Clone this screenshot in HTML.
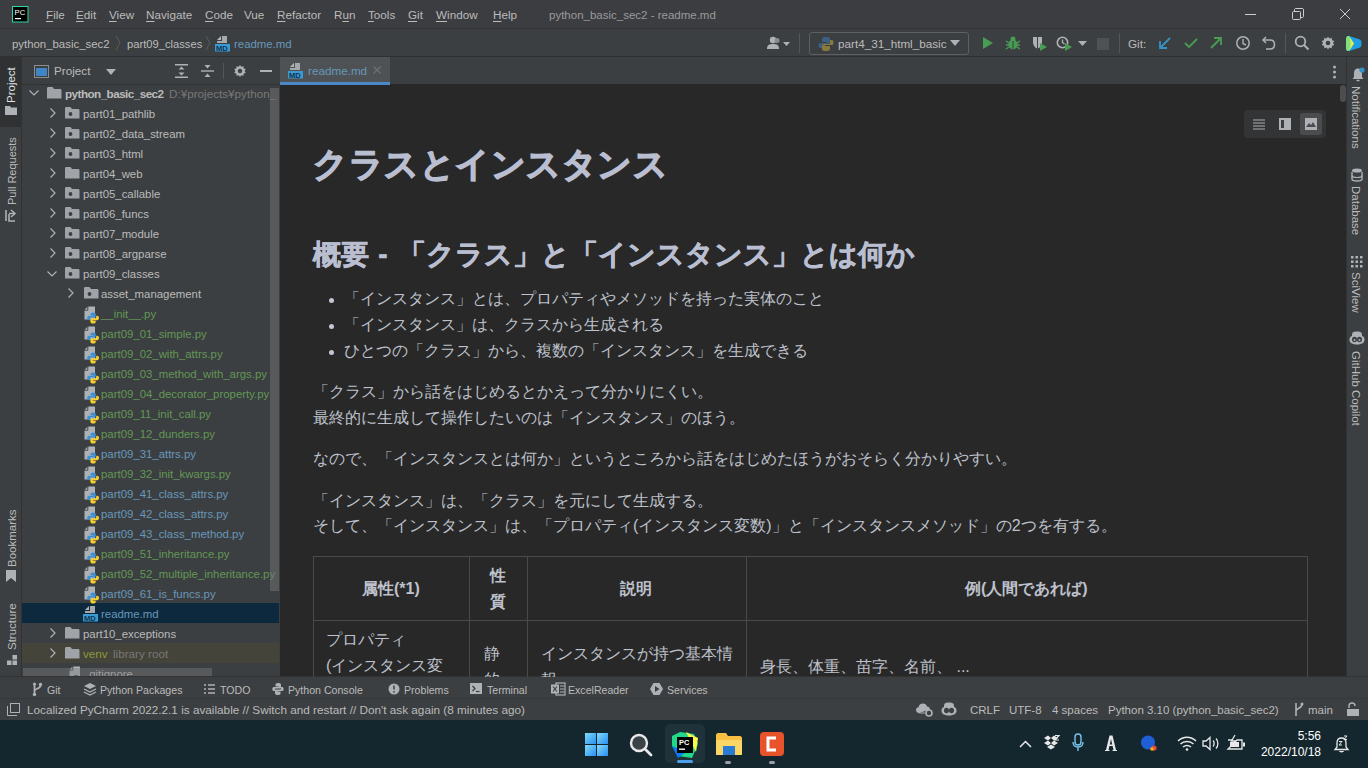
<!DOCTYPE html><html><head><meta charset="utf-8"><style>
*{box-sizing:border-box;margin:0;padding:0}
html,body{width:1368px;height:768px;overflow:hidden;background:#2b2b2b;font-family:"Liberation Sans",sans-serif;color:#bbbbbb}
.a{position:absolute}
.t{position:absolute;white-space:nowrap;font-size:11.7px;line-height:14px}
.u{text-decoration:underline;text-decoration-thickness:1px;text-underline-offset:2px}
svg{position:absolute;overflow:visible}
.md{position:absolute;white-space:nowrap;color:#bfc1c6}
</style></head><body>
<div class="a" style="left:0px;top:0px;width:1368px;height:29px;background:#3c3d41"></div>
<div class="a" style="left:0px;top:28px;width:1368px;height:1px;background:#323232"></div>
<div class="a" style="left:0px;top:29px;width:1368px;height:28px;background:#3c3f41"></div>
<div class="a" style="left:0px;top:56px;width:1368px;height:1px;background:#2f2f2f"></div>
<div class="a" style="left:0px;top:57px;width:22px;height:620px;background:#3c3f41"></div>
<div class="a" style="left:21px;top:57px;width:1px;height:620px;background:#323232"></div>
<div class="a" style="left:22px;top:57px;width:258px;height:620px;background:#3c3f41"></div>
<div class="a" style="left:280px;top:57px;width:1066px;height:27px;background:#3c3f41"></div>
<div class="a" style="left:280px;top:84px;width:1066px;height:593px;background:#282828"></div>
<div class="a" style="left:1346px;top:57px;width:22px;height:620px;background:#3c3f41"></div>
<div class="a" style="left:1346px;top:57px;width:1px;height:620px;background:#323232"></div>
<div class="a" style="left:0px;top:677px;width:1368px;height:21px;background:#3c3f41"></div>
<div class="a" style="left:0px;top:676px;width:1368px;height:1px;background:#323232"></div>
<div class="a" style="left:0px;top:698px;width:1368px;height:22px;background:#3c3f41"></div>
<div class="a" style="left:0px;top:698px;width:1368px;height:1px;background:#353739"></div>
<div class="a" style="left:0px;top:720px;width:1368px;height:48px;background:#14272e"></div>
<svg style="left:12px;top:6px" width="17" height="17" viewBox="0 0 17 17"><rect x="0.5" y="0.5" width="15.5" height="15.5" fill="#000" stroke="#2fd6a6" stroke-width="1"/><text x="2.6" y="8.6" font-size="7.6" fill="#fff" font-family="Liberation Sans">PC</text><rect x="3" y="12" width="6" height="1.2" fill="#fff"/></svg>
<div class="t" style="left:46px;top:8px;color:#bbbbbb"><span class="u">F</span>ile</div>
<div class="t" style="left:76px;top:8px;color:#bbbbbb"><span class="u">E</span>dit</div>
<div class="t" style="left:109px;top:8px;color:#bbbbbb"><span class="u">V</span>iew</div>
<div class="t" style="left:146px;top:8px;color:#bbbbbb"><span class="u">N</span>avigate</div>
<div class="t" style="left:205px;top:8px;color:#bbbbbb"><span class="u">C</span>ode</div>
<div class="t" style="left:244px;top:8px;color:#bbbbbb">Vue</div>
<div class="t" style="left:277px;top:8px;color:#bbbbbb"><span class="u">R</span>efactor</div>
<div class="t" style="left:334px;top:8px;color:#bbbbbb">R<span class="u">u</span>n</div>
<div class="t" style="left:368px;top:8px;color:#bbbbbb"><span class="u">T</span>ools</div>
<div class="t" style="left:408px;top:8px;color:#bbbbbb"><span class="u">G</span>it</div>
<div class="t" style="left:436px;top:8px;color:#bbbbbb"><span class="u">W</span>indow</div>
<div class="t" style="left:493px;top:8px;color:#bbbbbb"><span class="u">H</span>elp</div>
<div class="t" style="left:549px;top:8px;color:#9a9a9a;font-size:11.5px">python_basic_sec2 - readme.md</div>
<svg style="left:1244px;top:9px" width="14" height="10" viewBox="0 0 14 10"><line x1="1" y1="5.5" x2="12" y2="5.5" stroke="#ccc" stroke-width="1"/></svg>
<svg style="left:1292px;top:8px" width="13" height="13" viewBox="0 0 13 13"><rect x="0.5" y="3.5" width="8" height="8" rx="1" fill="none" stroke="#ccc"/><path d="M2.5 3V1.5C2.5 1 3 0.5 3.5 0.5H10.5C11 0.5 11.5 1 11.5 1.5V8.5C11.5 9 11 9.5 10.5 9.5H9" fill="none" stroke="#ccc"/></svg>
<svg style="left:1339px;top:8px" width="12" height="12" viewBox="0 0 12 12"><path d="M1 1L11 11M11 1L1 11" stroke="#ccc" stroke-width="1"/></svg>
<div class="t" style="left:12px;top:37px;color:#bbbbbb;font-size:11.4px">python_basic_sec2</div>
<svg style="left:115px;top:35px" width="6" height="16" viewBox="0 0 6 16"><path d="M1 1L5 8L1 15" fill="none" stroke="#5a5d5f" stroke-width="1"/></svg>
<div class="t" style="left:127px;top:37px;color:#bbbbbb;font-size:11.2px">part09_classes</div>
<svg style="left:205px;top:35px" width="6" height="16" viewBox="0 0 6 16"><path d="M1 1L5 8L1 15" fill="none" stroke="#5a5d5f" stroke-width="1"/></svg>
<svg style="left:215px;top:36px" width="16" height="16" viewBox="0 0 16 16"><path d="M2 4L6 0V4Z" fill="#b4b7ba"/><path d="M7 0H12V7H2V5H7Z" fill="#a6a9ac"/><rect x="0" y="8" width="15" height="7.5" fill="#3a9ad4"/><text x="1" y="14.8" font-size="7.6" fill="#123550" font-family="Liberation Sans" font-weight="bold" letter-spacing="-0.2">MD</text></svg>
<div class="t" style="left:234px;top:37px;color:#6897bb;font-size:11.4px">readme.md</div>
<svg style="left:766px;top:36px" width="24" height="14" viewBox="0 0 24 14"><circle cx="7" cy="4" r="3.2" fill="#aeb1b5"/><path d="M1 13C1 9 3 8 7 8C11 8 13 9 13 13Z" fill="#aeb1b5"/><circle cx="11" cy="4.5" r="2.5" fill="#8a8d90"/><path d="M17 6H24L20.5 10Z" fill="#aeb1b5"/></svg>
<div class="a" style="left:799px;top:33px;width:1px;height:20px;background:#515658"></div>
<div class="a" style="left:809px;top:32px;width:160px;height:23px;border:1px solid #5e6060;border-radius:3px;background:#3c3f41"></div>
<svg style="left:818px;top:36px" width="16" height="16" viewBox="0 0 16 16"><g opacity="0.55"><path d="M8 1C4 1 4 3 4 4V6H9V7H2C0 7 0 12 2 12H4V9C4 8 5 8 6 8H10C11 8 12 7 12 6V3C12 1 10 1 8 1Z" fill="#3e7bb8"/><path d="M8 15C12 15 12 13 12 12V10H7V9H14C16 9 16 4 14 4H12V7C12 8 11 8 10 8H6C5 8 4 9 4 10V13C4 15 6 15 8 15Z" fill="#c9a93a"/></g></svg>
<div class="t" style="left:838px;top:37px;color:#bbbbbb">part4_31_html_basic</div>
<svg style="left:950px;top:40px" width="10" height="6" viewBox="0 0 10 6"><path d="M0 0H10L5 6Z" fill="#aeb1b5"/></svg>
<svg style="left:982px;top:37px" width="12" height="12" viewBox="0 0 12 12"><path d="M1 0L11 6L1 12Z" fill="#499c54"/></svg>
<svg style="left:1005px;top:35px" width="16" height="16" viewBox="0 0 16 16"><ellipse cx="8" cy="9.5" rx="4.5" ry="5" fill="#499c54"/><circle cx="8" cy="4" r="2.5" fill="#499c54"/><path d="M1 6L4 8M15 6L12 8M1 10H4M15 10H12M1 14L4 12M15 14L12 12" stroke="#499c54" stroke-width="1.5"/><path d="M8 6V14" stroke="#3c3f41" stroke-width="1"/></svg>
<svg style="left:1031px;top:35px" width="18" height="18" viewBox="0 0 18 18"><path d="M2 2H11V7C11 11 8 13 6.5 14C5 13 2 11 2 7Z" fill="#aeb1b5"/><path d="M6.5 2V14" stroke="#3c3f41" stroke-width="1"/><path d="M9 8L16 12L9 16Z" fill="#499c54"/></svg>
<svg style="left:1056px;top:35px" width="18" height="18" viewBox="0 0 18 18"><circle cx="6.5" cy="7.5" r="5.2" fill="none" stroke="#aeb1b5" stroke-width="1.6"/><path d="M6.5 4.5V7.5L8.5 9" fill="none" stroke="#aeb1b5" stroke-width="1.3"/><path d="M9 8L16 12L9 16Z" fill="#499c54"/></svg>
<svg style="left:1078px;top:41px" width="9" height="5" viewBox="0 0 9 5"><path d="M0 0H9L4.5 5Z" fill="#aeb1b5"/></svg>
<div class="a" style="left:1097px;top:38px;width:12px;height:12px;background:#4f5254"></div>
<div class="a" style="left:1119px;top:33px;width:1px;height:20px;background:#515658"></div>
<div class="t" style="left:1128px;top:37px;color:#bbbbbb">Git:</div>
<svg style="left:1158px;top:36px" width="14" height="14" viewBox="0 0 14 14"><path d="M12 2L2 12M2 5V12H9" fill="none" stroke="#3592c4" stroke-width="1.8"/></svg>
<svg style="left:1184px;top:36px" width="14" height="14" viewBox="0 0 14 14"><path d="M1 7L5 11L13 3" fill="none" stroke="#499c54" stroke-width="1.8"/></svg>
<svg style="left:1209px;top:36px" width="14" height="14" viewBox="0 0 14 14"><path d="M2 12L12 2M5 2H12V9" fill="none" stroke="#499c54" stroke-width="1.8"/></svg>
<svg style="left:1235px;top:35px" width="16" height="16" viewBox="0 0 16 16"><circle cx="8" cy="8" r="6.2" fill="none" stroke="#aeb1b5" stroke-width="1.5"/><path d="M8 4V8.5L11 10" fill="none" stroke="#aeb1b5" stroke-width="1.4"/></svg>
<svg style="left:1261px;top:35px" width="16" height="16" viewBox="0 0 16 16"><path d="M5 2L2 5L5 8" fill="none" stroke="#aeb1b5" stroke-width="1.5"/><path d="M2.5 5H9C12 5 13.5 7 13.5 9.5C13.5 12 12 14 9 14H5" fill="none" stroke="#aeb1b5" stroke-width="1.5"/></svg>
<div class="a" style="left:1285px;top:33px;width:1px;height:20px;background:#515658"></div>
<svg style="left:1294px;top:35px" width="16" height="16" viewBox="0 0 16 16"><circle cx="6.5" cy="6.5" r="4.8" fill="none" stroke="#aeb1b5" stroke-width="1.8"/><path d="M10 10L14.5 14.5" stroke="#aeb1b5" stroke-width="2"/></svg>
<svg style="left:1320px;top:35px" width="16" height="16" viewBox="0 0 16 16"><path d="M8 1.5L9.3 3.5L11.7 2.8L12 5.2L14.3 6L13 8L14.3 10L12 10.8L11.7 13.2L9.3 12.5L8 14.5L6.7 12.5L4.3 13.2L4 10.8L1.7 10L3 8L1.7 6L4 5.2L4.3 2.8L6.7 3.5Z" fill="#aeb1b5"/><circle cx="8" cy="8" r="2.3" fill="#3c3f41"/></svg>
<svg style="left:1345px;top:35px" width="18" height="17" viewBox="0 0 18 17"><path d="M4 1L15 4.5C17 5 17 12 15 12.5L4 16C2 16.5 1 15 1 13V4C1 2 2 0.5 4 1Z" fill="#1d9fe8"/><path d="M4 1C2 0.5 1 2 1 4V13C1 15 2 16.5 4 16L9 8.5Z" fill="#7be27c"/><path d="M4 1L9 8.5L4 16C6 12 6 5 4 1Z" fill="#e8e85a"/></svg>
<div class="a" style="left:0px;top:57px;width:21px;height:70px;background:#2f3133"></div>
<div class="t" style="left:4px;top:103px;transform-origin:0 0;transform:rotate(-90deg);color:#dfe1e5;font-size:11.5px">Project</div>
<svg style="left:5px;top:105px" width="12" height="10" viewBox="0 0 12 10"><path d="M0 1H5L6 2.5H12V10H0Z" fill="#aeb1b5"/></svg>
<div class="t" style="left:5px;top:205px;transform-origin:0 0;transform:rotate(-90deg);color:#bbbbbb;font-size:11px">Pull Requests</div>
<svg style="left:5px;top:209px" width="12" height="13" viewBox="0 0 12 13"><path d="M1 1V12M4 5V12H10" fill="none" stroke="#aeb1b5" stroke-width="1.6"/><path d="M6 1L10 4.5L6 8" fill="none" stroke="#aeb1b5" stroke-width="1.5"/><path d="M4 4.5H10" stroke="#aeb1b5" stroke-width="1.5"/></svg>
<div class="t" style="left:5px;top:567px;transform-origin:0 0;transform:rotate(-90deg);color:#bbbbbb;font-size:11.5px">Bookmarks</div>
<svg style="left:6px;top:570px" width="10" height="12" viewBox="0 0 10 12"><path d="M0 0H10V12L5 8L0 12Z" fill="#aeb1b5"/></svg>
<div class="t" style="left:5px;top:650px;transform-origin:0 0;transform:rotate(-90deg);color:#bbbbbb;font-size:11.5px">Structure</div>
<svg style="left:7px;top:655px" width="10" height="10" viewBox="0 0 10 10"><rect x="0" y="5.5" width="4.5" height="4.5" fill="#aeb1b5"/><rect x="5.5" y="5.5" width="4.5" height="4.5" fill="#aeb1b5"/><rect x="5.5" y="0" width="4.5" height="4.5" fill="#aeb1b5"/></svg>
<svg style="left:34px;top:65px" width="15" height="13" viewBox="0 0 15 13"><rect x="0.5" y="0.5" width="14" height="12" fill="none" stroke="#8a8d90"/><rect x="2" y="3" width="11" height="8" fill="#3e86c5"/></svg>
<div class="t" style="left:54px;top:64px;color:#bbbbbb">Project</div>
<svg style="left:106px;top:69px" width="10" height="6" viewBox="0 0 10 6"><path d="M0 0H10L5 6Z" fill="#aeb1b5"/></svg>
<svg style="left:175px;top:64px" width="13" height="14" viewBox="0 0 13 14"><path d="M0 0.7H13M0 13.3H13" stroke="#aeb1b5" stroke-width="1.4"/><path d="M3.5 5.5L6.5 2.5L9.5 5.5M3.5 8.5L6.5 11.5L9.5 8.5" fill="#aeb1b5"/></svg>
<svg style="left:201px;top:64px" width="13" height="14" viewBox="0 0 13 14"><path d="M0 7H13" stroke="#aeb1b5" stroke-width="1.4"/><path d="M3.5 1L6.5 4.5L9.5 1ZM3.5 13L6.5 9.5L9.5 13Z" fill="#aeb1b5"/></svg>
<div class="a" style="left:223px;top:63px;width:1px;height:16px;background:#515658"></div>
<svg style="left:233px;top:64px" width="14" height="14" viewBox="0 0 14 14"><path d="M7 0.5L8.2 2.3L10.4 1.7L10.7 3.9L12.8 4.6L11.6 6.5L12.8 8.4L10.7 9.1L10.4 11.3L8.2 10.7L7 12.5L5.8 10.7L3.6 11.3L3.3 9.1L1.2 8.4L2.4 6.5L1.2 4.6L3.3 3.9L3.6 1.7L5.8 2.3Z" fill="#aeb1b5" transform="translate(0,0.5)"/><circle cx="7" cy="7" r="2.2" fill="#3c3f41"/></svg>
<div class="a" style="left:260px;top:70px;width:12px;height:1.5px;background:#aeb1b5"></div>
<div class="a" style="left:22px;top:84px;width:258px;height:1px;background:#323232"></div>
<div class="a" style="left:22px;top:603px;width:257px;height:20px;background:#0d293e"></div>
<div class="a" style="left:22px;top:643px;width:257px;height:20px;background:#45443a"></div>
<svg style="left:29px;top:90px" width="10" height="6" viewBox="0 0 10 6"><path d="M0.5 0.5L5 5L9.5 0.5" fill="none" stroke="#aeb1b5" stroke-width="1.2"/></svg>
<svg style="left:47px;top:87px" width="15" height="12" viewBox="0 0 15 12"><path d="M0 1.5C0 0.7 0.5 0 1.3 0H5.5L7 2H13.2C14 2 14.5 2.6 14.5 3.3V11.5H0Z" fill="#a0a3a7"/></svg>
<div class="t" style="left:65px;top:87px;color:#bbbbbb;letter-spacing:-0.55px"><b>python_basic_sec2</b></div>
<div class="t" style="left:169px;top:87px;color:#787878">D:¥projects¥python_</div>
<svg style="left:50px;top:108px" width="6" height="10" viewBox="0 0 6 10"><path d="M0.5 0.5L5 5L0.5 9.5" fill="none" stroke="#aeb1b5" stroke-width="1.2"/></svg>
<svg style="left:65px;top:107px" width="15" height="12" viewBox="0 0 15 12"><path d="M0 1.5C0 0.7 0.5 0 1.3 0H5.5L7 2H13.2C14 2 14.5 2.6 14.5 3.3V11.5H0Z" fill="#a0a3a7"/><circle cx="5.5" cy="7" r="1.9" fill="#3c3f41"/></svg>
<div class="t" style="left:83px;top:107px;color:#bbbbbb;font-size:11.4px">part01_pathlib</div>
<svg style="left:50px;top:128px" width="6" height="10" viewBox="0 0 6 10"><path d="M0.5 0.5L5 5L0.5 9.5" fill="none" stroke="#aeb1b5" stroke-width="1.2"/></svg>
<svg style="left:65px;top:127px" width="15" height="12" viewBox="0 0 15 12"><path d="M0 1.5C0 0.7 0.5 0 1.3 0H5.5L7 2H13.2C14 2 14.5 2.6 14.5 3.3V11.5H0Z" fill="#a0a3a7"/><circle cx="5.5" cy="7" r="1.9" fill="#3c3f41"/></svg>
<div class="t" style="left:83px;top:127px;color:#bbbbbb;font-size:11.4px">part02_data_stream</div>
<svg style="left:50px;top:148px" width="6" height="10" viewBox="0 0 6 10"><path d="M0.5 0.5L5 5L0.5 9.5" fill="none" stroke="#aeb1b5" stroke-width="1.2"/></svg>
<svg style="left:65px;top:147px" width="15" height="12" viewBox="0 0 15 12"><path d="M0 1.5C0 0.7 0.5 0 1.3 0H5.5L7 2H13.2C14 2 14.5 2.6 14.5 3.3V11.5H0Z" fill="#a0a3a7"/><circle cx="5.5" cy="7" r="1.9" fill="#3c3f41"/></svg>
<div class="t" style="left:83px;top:147px;color:#bbbbbb;font-size:11.4px">part03_html</div>
<svg style="left:50px;top:168px" width="6" height="10" viewBox="0 0 6 10"><path d="M0.5 0.5L5 5L0.5 9.5" fill="none" stroke="#aeb1b5" stroke-width="1.2"/></svg>
<svg style="left:65px;top:167px" width="15" height="12" viewBox="0 0 15 12"><path d="M0 1.5C0 0.7 0.5 0 1.3 0H5.5L7 2H13.2C14 2 14.5 2.6 14.5 3.3V11.5H0Z" fill="#a0a3a7"/></svg>
<div class="t" style="left:83px;top:167px;color:#bbbbbb;font-size:11.4px">part04_web</div>
<svg style="left:50px;top:188px" width="6" height="10" viewBox="0 0 6 10"><path d="M0.5 0.5L5 5L0.5 9.5" fill="none" stroke="#aeb1b5" stroke-width="1.2"/></svg>
<svg style="left:65px;top:187px" width="15" height="12" viewBox="0 0 15 12"><path d="M0 1.5C0 0.7 0.5 0 1.3 0H5.5L7 2H13.2C14 2 14.5 2.6 14.5 3.3V11.5H0Z" fill="#a0a3a7"/><circle cx="5.5" cy="7" r="1.9" fill="#3c3f41"/></svg>
<div class="t" style="left:83px;top:187px;color:#bbbbbb;font-size:11.4px">part05_callable</div>
<svg style="left:50px;top:208px" width="6" height="10" viewBox="0 0 6 10"><path d="M0.5 0.5L5 5L0.5 9.5" fill="none" stroke="#aeb1b5" stroke-width="1.2"/></svg>
<svg style="left:65px;top:207px" width="15" height="12" viewBox="0 0 15 12"><path d="M0 1.5C0 0.7 0.5 0 1.3 0H5.5L7 2H13.2C14 2 14.5 2.6 14.5 3.3V11.5H0Z" fill="#a0a3a7"/><circle cx="5.5" cy="7" r="1.9" fill="#3c3f41"/></svg>
<div class="t" style="left:83px;top:207px;color:#bbbbbb;font-size:11.4px">part06_funcs</div>
<svg style="left:50px;top:228px" width="6" height="10" viewBox="0 0 6 10"><path d="M0.5 0.5L5 5L0.5 9.5" fill="none" stroke="#aeb1b5" stroke-width="1.2"/></svg>
<svg style="left:65px;top:227px" width="15" height="12" viewBox="0 0 15 12"><path d="M0 1.5C0 0.7 0.5 0 1.3 0H5.5L7 2H13.2C14 2 14.5 2.6 14.5 3.3V11.5H0Z" fill="#a0a3a7"/><circle cx="5.5" cy="7" r="1.9" fill="#3c3f41"/></svg>
<div class="t" style="left:83px;top:227px;color:#bbbbbb;font-size:11.4px">part07_module</div>
<svg style="left:50px;top:248px" width="6" height="10" viewBox="0 0 6 10"><path d="M0.5 0.5L5 5L0.5 9.5" fill="none" stroke="#aeb1b5" stroke-width="1.2"/></svg>
<svg style="left:65px;top:247px" width="15" height="12" viewBox="0 0 15 12"><path d="M0 1.5C0 0.7 0.5 0 1.3 0H5.5L7 2H13.2C14 2 14.5 2.6 14.5 3.3V11.5H0Z" fill="#a0a3a7"/><circle cx="5.5" cy="7" r="1.9" fill="#3c3f41"/></svg>
<div class="t" style="left:83px;top:247px;color:#bbbbbb;font-size:11.4px">part08_argparse</div>
<svg style="left:47px;top:271px" width="10" height="6" viewBox="0 0 10 6"><path d="M0.5 0.5L5 5L9.5 0.5" fill="none" stroke="#aeb1b5" stroke-width="1.2"/></svg>
<svg style="left:65px;top:267px" width="15" height="12" viewBox="0 0 15 12"><path d="M0 1.5C0 0.7 0.5 0 1.3 0H5.5L7 2H13.2C14 2 14.5 2.6 14.5 3.3V11.5H0Z" fill="#a0a3a7"/><circle cx="5.5" cy="7" r="1.9" fill="#3c3f41"/></svg>
<div class="t" style="left:83px;top:267px;color:#bbbbbb;font-size:11.4px">part09_classes</div>
<svg style="left:68px;top:288px" width="6" height="10" viewBox="0 0 6 10"><path d="M0.5 0.5L5 5L0.5 9.5" fill="none" stroke="#aeb1b5" stroke-width="1.2"/></svg>
<svg style="left:84px;top:287px" width="15" height="12" viewBox="0 0 15 12"><path d="M0 1.5C0 0.7 0.5 0 1.3 0H5.5L7 2H13.2C14 2 14.5 2.6 14.5 3.3V11.5H0Z" fill="#a0a3a7"/><circle cx="5.5" cy="7" r="1.9" fill="#3c3f41"/></svg>
<div class="t" style="left:101px;top:287px;color:#bbbbbb;font-size:11.4px">asset_management</div>
<svg style="left:83px;top:306px" width="16" height="16" viewBox="0 0 16 16"><path d="M5.5 0.5H12V13.5H1.5V5Z" fill="#aeb1b5"/><path d="M1.5 4L4.5 0.5V4Z" fill="#aeb1b5"/><path d="M1.5 4.2H4.8V0.5" fill="none" stroke="#3c3f41" stroke-width="0.9"/><path d="M10 6.5C8 6.5 7.5 7.3 7.5 8.3V9.2H10.3V9.8H6.2C5 9.8 4.2 10.6 4.2 12C4.2 13.4 5 14.2 6.1 14.2H7V12.9C7 12 7.6 11.5 8.5 11.5H11.4C12.2 11.5 12.8 10.9 12.8 10.1V8.3C12.8 7.4 12 6.5 10 6.5Z" fill="#3d8fd6"/><path d="M10.2 17.5C12.2 17.5 12.7 16.7 12.7 15.7V14.8H9.9V14.2H14C15.2 14.2 16 13.4 16 12C16 10.6 15.2 9.8 14.1 9.8H13.2V11.1C13.2 12 12.6 12.5 11.7 12.5H8.8C8 12.5 7.4 13.1 7.4 13.9V15.7C7.4 16.6 8.2 17.5 10.2 17.5Z" fill="#f5cf2f"/></svg>
<div class="t" style="left:101px;top:307px;color:#629755;font-size:11.4px">__init__.py</div>
<svg style="left:83px;top:326px" width="16" height="16" viewBox="0 0 16 16"><path d="M5.5 0.5H12V13.5H1.5V5Z" fill="#aeb1b5"/><path d="M1.5 4L4.5 0.5V4Z" fill="#aeb1b5"/><path d="M1.5 4.2H4.8V0.5" fill="none" stroke="#3c3f41" stroke-width="0.9"/><path d="M10 6.5C8 6.5 7.5 7.3 7.5 8.3V9.2H10.3V9.8H6.2C5 9.8 4.2 10.6 4.2 12C4.2 13.4 5 14.2 6.1 14.2H7V12.9C7 12 7.6 11.5 8.5 11.5H11.4C12.2 11.5 12.8 10.9 12.8 10.1V8.3C12.8 7.4 12 6.5 10 6.5Z" fill="#3d8fd6"/><path d="M10.2 17.5C12.2 17.5 12.7 16.7 12.7 15.7V14.8H9.9V14.2H14C15.2 14.2 16 13.4 16 12C16 10.6 15.2 9.8 14.1 9.8H13.2V11.1C13.2 12 12.6 12.5 11.7 12.5H8.8C8 12.5 7.4 13.1 7.4 13.9V15.7C7.4 16.6 8.2 17.5 10.2 17.5Z" fill="#f5cf2f"/></svg>
<div class="t" style="left:101px;top:327px;color:#629755;font-size:11.4px">part09_01_simple.py</div>
<svg style="left:83px;top:346px" width="16" height="16" viewBox="0 0 16 16"><path d="M5.5 0.5H12V13.5H1.5V5Z" fill="#aeb1b5"/><path d="M1.5 4L4.5 0.5V4Z" fill="#aeb1b5"/><path d="M1.5 4.2H4.8V0.5" fill="none" stroke="#3c3f41" stroke-width="0.9"/><path d="M10 6.5C8 6.5 7.5 7.3 7.5 8.3V9.2H10.3V9.8H6.2C5 9.8 4.2 10.6 4.2 12C4.2 13.4 5 14.2 6.1 14.2H7V12.9C7 12 7.6 11.5 8.5 11.5H11.4C12.2 11.5 12.8 10.9 12.8 10.1V8.3C12.8 7.4 12 6.5 10 6.5Z" fill="#3d8fd6"/><path d="M10.2 17.5C12.2 17.5 12.7 16.7 12.7 15.7V14.8H9.9V14.2H14C15.2 14.2 16 13.4 16 12C16 10.6 15.2 9.8 14.1 9.8H13.2V11.1C13.2 12 12.6 12.5 11.7 12.5H8.8C8 12.5 7.4 13.1 7.4 13.9V15.7C7.4 16.6 8.2 17.5 10.2 17.5Z" fill="#f5cf2f"/></svg>
<div class="t" style="left:101px;top:347px;color:#629755;font-size:11.4px">part09_02_with_attrs.py</div>
<svg style="left:83px;top:366px" width="16" height="16" viewBox="0 0 16 16"><path d="M5.5 0.5H12V13.5H1.5V5Z" fill="#aeb1b5"/><path d="M1.5 4L4.5 0.5V4Z" fill="#aeb1b5"/><path d="M1.5 4.2H4.8V0.5" fill="none" stroke="#3c3f41" stroke-width="0.9"/><path d="M10 6.5C8 6.5 7.5 7.3 7.5 8.3V9.2H10.3V9.8H6.2C5 9.8 4.2 10.6 4.2 12C4.2 13.4 5 14.2 6.1 14.2H7V12.9C7 12 7.6 11.5 8.5 11.5H11.4C12.2 11.5 12.8 10.9 12.8 10.1V8.3C12.8 7.4 12 6.5 10 6.5Z" fill="#3d8fd6"/><path d="M10.2 17.5C12.2 17.5 12.7 16.7 12.7 15.7V14.8H9.9V14.2H14C15.2 14.2 16 13.4 16 12C16 10.6 15.2 9.8 14.1 9.8H13.2V11.1C13.2 12 12.6 12.5 11.7 12.5H8.8C8 12.5 7.4 13.1 7.4 13.9V15.7C7.4 16.6 8.2 17.5 10.2 17.5Z" fill="#f5cf2f"/></svg>
<div class="t" style="left:101px;top:367px;color:#629755;font-size:11.4px">part09_03_method_with_args.py</div>
<svg style="left:83px;top:386px" width="16" height="16" viewBox="0 0 16 16"><path d="M5.5 0.5H12V13.5H1.5V5Z" fill="#aeb1b5"/><path d="M1.5 4L4.5 0.5V4Z" fill="#aeb1b5"/><path d="M1.5 4.2H4.8V0.5" fill="none" stroke="#3c3f41" stroke-width="0.9"/><path d="M10 6.5C8 6.5 7.5 7.3 7.5 8.3V9.2H10.3V9.8H6.2C5 9.8 4.2 10.6 4.2 12C4.2 13.4 5 14.2 6.1 14.2H7V12.9C7 12 7.6 11.5 8.5 11.5H11.4C12.2 11.5 12.8 10.9 12.8 10.1V8.3C12.8 7.4 12 6.5 10 6.5Z" fill="#3d8fd6"/><path d="M10.2 17.5C12.2 17.5 12.7 16.7 12.7 15.7V14.8H9.9V14.2H14C15.2 14.2 16 13.4 16 12C16 10.6 15.2 9.8 14.1 9.8H13.2V11.1C13.2 12 12.6 12.5 11.7 12.5H8.8C8 12.5 7.4 13.1 7.4 13.9V15.7C7.4 16.6 8.2 17.5 10.2 17.5Z" fill="#f5cf2f"/></svg>
<div class="t" style="left:101px;top:387px;color:#629755;font-size:11.4px">part09_04_decorator_property.py</div>
<svg style="left:83px;top:406px" width="16" height="16" viewBox="0 0 16 16"><path d="M5.5 0.5H12V13.5H1.5V5Z" fill="#aeb1b5"/><path d="M1.5 4L4.5 0.5V4Z" fill="#aeb1b5"/><path d="M1.5 4.2H4.8V0.5" fill="none" stroke="#3c3f41" stroke-width="0.9"/><path d="M10 6.5C8 6.5 7.5 7.3 7.5 8.3V9.2H10.3V9.8H6.2C5 9.8 4.2 10.6 4.2 12C4.2 13.4 5 14.2 6.1 14.2H7V12.9C7 12 7.6 11.5 8.5 11.5H11.4C12.2 11.5 12.8 10.9 12.8 10.1V8.3C12.8 7.4 12 6.5 10 6.5Z" fill="#3d8fd6"/><path d="M10.2 17.5C12.2 17.5 12.7 16.7 12.7 15.7V14.8H9.9V14.2H14C15.2 14.2 16 13.4 16 12C16 10.6 15.2 9.8 14.1 9.8H13.2V11.1C13.2 12 12.6 12.5 11.7 12.5H8.8C8 12.5 7.4 13.1 7.4 13.9V15.7C7.4 16.6 8.2 17.5 10.2 17.5Z" fill="#f5cf2f"/></svg>
<div class="t" style="left:101px;top:407px;color:#629755;font-size:11.4px">part09_11_init_call.py</div>
<svg style="left:83px;top:426px" width="16" height="16" viewBox="0 0 16 16"><path d="M5.5 0.5H12V13.5H1.5V5Z" fill="#aeb1b5"/><path d="M1.5 4L4.5 0.5V4Z" fill="#aeb1b5"/><path d="M1.5 4.2H4.8V0.5" fill="none" stroke="#3c3f41" stroke-width="0.9"/><path d="M10 6.5C8 6.5 7.5 7.3 7.5 8.3V9.2H10.3V9.8H6.2C5 9.8 4.2 10.6 4.2 12C4.2 13.4 5 14.2 6.1 14.2H7V12.9C7 12 7.6 11.5 8.5 11.5H11.4C12.2 11.5 12.8 10.9 12.8 10.1V8.3C12.8 7.4 12 6.5 10 6.5Z" fill="#3d8fd6"/><path d="M10.2 17.5C12.2 17.5 12.7 16.7 12.7 15.7V14.8H9.9V14.2H14C15.2 14.2 16 13.4 16 12C16 10.6 15.2 9.8 14.1 9.8H13.2V11.1C13.2 12 12.6 12.5 11.7 12.5H8.8C8 12.5 7.4 13.1 7.4 13.9V15.7C7.4 16.6 8.2 17.5 10.2 17.5Z" fill="#f5cf2f"/></svg>
<div class="t" style="left:101px;top:427px;color:#629755;font-size:11.4px">part09_12_dunders.py</div>
<svg style="left:83px;top:446px" width="16" height="16" viewBox="0 0 16 16"><path d="M5.5 0.5H12V13.5H1.5V5Z" fill="#aeb1b5"/><path d="M1.5 4L4.5 0.5V4Z" fill="#aeb1b5"/><path d="M1.5 4.2H4.8V0.5" fill="none" stroke="#3c3f41" stroke-width="0.9"/><path d="M10 6.5C8 6.5 7.5 7.3 7.5 8.3V9.2H10.3V9.8H6.2C5 9.8 4.2 10.6 4.2 12C4.2 13.4 5 14.2 6.1 14.2H7V12.9C7 12 7.6 11.5 8.5 11.5H11.4C12.2 11.5 12.8 10.9 12.8 10.1V8.3C12.8 7.4 12 6.5 10 6.5Z" fill="#3d8fd6"/><path d="M10.2 17.5C12.2 17.5 12.7 16.7 12.7 15.7V14.8H9.9V14.2H14C15.2 14.2 16 13.4 16 12C16 10.6 15.2 9.8 14.1 9.8H13.2V11.1C13.2 12 12.6 12.5 11.7 12.5H8.8C8 12.5 7.4 13.1 7.4 13.9V15.7C7.4 16.6 8.2 17.5 10.2 17.5Z" fill="#f5cf2f"/></svg>
<div class="t" style="left:101px;top:447px;color:#6897bb;font-size:11.4px">part09_31_attrs.py</div>
<svg style="left:83px;top:466px" width="16" height="16" viewBox="0 0 16 16"><path d="M5.5 0.5H12V13.5H1.5V5Z" fill="#aeb1b5"/><path d="M1.5 4L4.5 0.5V4Z" fill="#aeb1b5"/><path d="M1.5 4.2H4.8V0.5" fill="none" stroke="#3c3f41" stroke-width="0.9"/><path d="M10 6.5C8 6.5 7.5 7.3 7.5 8.3V9.2H10.3V9.8H6.2C5 9.8 4.2 10.6 4.2 12C4.2 13.4 5 14.2 6.1 14.2H7V12.9C7 12 7.6 11.5 8.5 11.5H11.4C12.2 11.5 12.8 10.9 12.8 10.1V8.3C12.8 7.4 12 6.5 10 6.5Z" fill="#3d8fd6"/><path d="M10.2 17.5C12.2 17.5 12.7 16.7 12.7 15.7V14.8H9.9V14.2H14C15.2 14.2 16 13.4 16 12C16 10.6 15.2 9.8 14.1 9.8H13.2V11.1C13.2 12 12.6 12.5 11.7 12.5H8.8C8 12.5 7.4 13.1 7.4 13.9V15.7C7.4 16.6 8.2 17.5 10.2 17.5Z" fill="#f5cf2f"/></svg>
<div class="t" style="left:101px;top:467px;color:#629755;font-size:11.4px">part09_32_init_kwargs.py</div>
<svg style="left:83px;top:486px" width="16" height="16" viewBox="0 0 16 16"><path d="M5.5 0.5H12V13.5H1.5V5Z" fill="#aeb1b5"/><path d="M1.5 4L4.5 0.5V4Z" fill="#aeb1b5"/><path d="M1.5 4.2H4.8V0.5" fill="none" stroke="#3c3f41" stroke-width="0.9"/><path d="M10 6.5C8 6.5 7.5 7.3 7.5 8.3V9.2H10.3V9.8H6.2C5 9.8 4.2 10.6 4.2 12C4.2 13.4 5 14.2 6.1 14.2H7V12.9C7 12 7.6 11.5 8.5 11.5H11.4C12.2 11.5 12.8 10.9 12.8 10.1V8.3C12.8 7.4 12 6.5 10 6.5Z" fill="#3d8fd6"/><path d="M10.2 17.5C12.2 17.5 12.7 16.7 12.7 15.7V14.8H9.9V14.2H14C15.2 14.2 16 13.4 16 12C16 10.6 15.2 9.8 14.1 9.8H13.2V11.1C13.2 12 12.6 12.5 11.7 12.5H8.8C8 12.5 7.4 13.1 7.4 13.9V15.7C7.4 16.6 8.2 17.5 10.2 17.5Z" fill="#f5cf2f"/></svg>
<div class="t" style="left:101px;top:487px;color:#6897bb;font-size:11.4px">part09_41_class_attrs.py</div>
<svg style="left:83px;top:506px" width="16" height="16" viewBox="0 0 16 16"><path d="M5.5 0.5H12V13.5H1.5V5Z" fill="#aeb1b5"/><path d="M1.5 4L4.5 0.5V4Z" fill="#aeb1b5"/><path d="M1.5 4.2H4.8V0.5" fill="none" stroke="#3c3f41" stroke-width="0.9"/><path d="M10 6.5C8 6.5 7.5 7.3 7.5 8.3V9.2H10.3V9.8H6.2C5 9.8 4.2 10.6 4.2 12C4.2 13.4 5 14.2 6.1 14.2H7V12.9C7 12 7.6 11.5 8.5 11.5H11.4C12.2 11.5 12.8 10.9 12.8 10.1V8.3C12.8 7.4 12 6.5 10 6.5Z" fill="#3d8fd6"/><path d="M10.2 17.5C12.2 17.5 12.7 16.7 12.7 15.7V14.8H9.9V14.2H14C15.2 14.2 16 13.4 16 12C16 10.6 15.2 9.8 14.1 9.8H13.2V11.1C13.2 12 12.6 12.5 11.7 12.5H8.8C8 12.5 7.4 13.1 7.4 13.9V15.7C7.4 16.6 8.2 17.5 10.2 17.5Z" fill="#f5cf2f"/></svg>
<div class="t" style="left:101px;top:507px;color:#6897bb;font-size:11.4px">part09_42_class_attrs.py</div>
<svg style="left:83px;top:526px" width="16" height="16" viewBox="0 0 16 16"><path d="M5.5 0.5H12V13.5H1.5V5Z" fill="#aeb1b5"/><path d="M1.5 4L4.5 0.5V4Z" fill="#aeb1b5"/><path d="M1.5 4.2H4.8V0.5" fill="none" stroke="#3c3f41" stroke-width="0.9"/><path d="M10 6.5C8 6.5 7.5 7.3 7.5 8.3V9.2H10.3V9.8H6.2C5 9.8 4.2 10.6 4.2 12C4.2 13.4 5 14.2 6.1 14.2H7V12.9C7 12 7.6 11.5 8.5 11.5H11.4C12.2 11.5 12.8 10.9 12.8 10.1V8.3C12.8 7.4 12 6.5 10 6.5Z" fill="#3d8fd6"/><path d="M10.2 17.5C12.2 17.5 12.7 16.7 12.7 15.7V14.8H9.9V14.2H14C15.2 14.2 16 13.4 16 12C16 10.6 15.2 9.8 14.1 9.8H13.2V11.1C13.2 12 12.6 12.5 11.7 12.5H8.8C8 12.5 7.4 13.1 7.4 13.9V15.7C7.4 16.6 8.2 17.5 10.2 17.5Z" fill="#f5cf2f"/></svg>
<div class="t" style="left:101px;top:527px;color:#6897bb;font-size:11.4px">part09_43_class_method.py</div>
<svg style="left:83px;top:546px" width="16" height="16" viewBox="0 0 16 16"><path d="M5.5 0.5H12V13.5H1.5V5Z" fill="#aeb1b5"/><path d="M1.5 4L4.5 0.5V4Z" fill="#aeb1b5"/><path d="M1.5 4.2H4.8V0.5" fill="none" stroke="#3c3f41" stroke-width="0.9"/><path d="M10 6.5C8 6.5 7.5 7.3 7.5 8.3V9.2H10.3V9.8H6.2C5 9.8 4.2 10.6 4.2 12C4.2 13.4 5 14.2 6.1 14.2H7V12.9C7 12 7.6 11.5 8.5 11.5H11.4C12.2 11.5 12.8 10.9 12.8 10.1V8.3C12.8 7.4 12 6.5 10 6.5Z" fill="#3d8fd6"/><path d="M10.2 17.5C12.2 17.5 12.7 16.7 12.7 15.7V14.8H9.9V14.2H14C15.2 14.2 16 13.4 16 12C16 10.6 15.2 9.8 14.1 9.8H13.2V11.1C13.2 12 12.6 12.5 11.7 12.5H8.8C8 12.5 7.4 13.1 7.4 13.9V15.7C7.4 16.6 8.2 17.5 10.2 17.5Z" fill="#f5cf2f"/></svg>
<div class="t" style="left:101px;top:547px;color:#629755;font-size:11.4px">part09_51_inheritance.py</div>
<svg style="left:83px;top:566px" width="16" height="16" viewBox="0 0 16 16"><path d="M5.5 0.5H12V13.5H1.5V5Z" fill="#aeb1b5"/><path d="M1.5 4L4.5 0.5V4Z" fill="#aeb1b5"/><path d="M1.5 4.2H4.8V0.5" fill="none" stroke="#3c3f41" stroke-width="0.9"/><path d="M10 6.5C8 6.5 7.5 7.3 7.5 8.3V9.2H10.3V9.8H6.2C5 9.8 4.2 10.6 4.2 12C4.2 13.4 5 14.2 6.1 14.2H7V12.9C7 12 7.6 11.5 8.5 11.5H11.4C12.2 11.5 12.8 10.9 12.8 10.1V8.3C12.8 7.4 12 6.5 10 6.5Z" fill="#3d8fd6"/><path d="M10.2 17.5C12.2 17.5 12.7 16.7 12.7 15.7V14.8H9.9V14.2H14C15.2 14.2 16 13.4 16 12C16 10.6 15.2 9.8 14.1 9.8H13.2V11.1C13.2 12 12.6 12.5 11.7 12.5H8.8C8 12.5 7.4 13.1 7.4 13.9V15.7C7.4 16.6 8.2 17.5 10.2 17.5Z" fill="#f5cf2f"/></svg>
<div class="t" style="left:101px;top:567px;color:#629755;font-size:11.4px">part09_52_multiple_inheritance.py</div>
<svg style="left:83px;top:586px" width="16" height="16" viewBox="0 0 16 16"><path d="M5.5 0.5H12V13.5H1.5V5Z" fill="#aeb1b5"/><path d="M1.5 4L4.5 0.5V4Z" fill="#aeb1b5"/><path d="M1.5 4.2H4.8V0.5" fill="none" stroke="#3c3f41" stroke-width="0.9"/><path d="M10 6.5C8 6.5 7.5 7.3 7.5 8.3V9.2H10.3V9.8H6.2C5 9.8 4.2 10.6 4.2 12C4.2 13.4 5 14.2 6.1 14.2H7V12.9C7 12 7.6 11.5 8.5 11.5H11.4C12.2 11.5 12.8 10.9 12.8 10.1V8.3C12.8 7.4 12 6.5 10 6.5Z" fill="#3d8fd6"/><path d="M10.2 17.5C12.2 17.5 12.7 16.7 12.7 15.7V14.8H9.9V14.2H14C15.2 14.2 16 13.4 16 12C16 10.6 15.2 9.8 14.1 9.8H13.2V11.1C13.2 12 12.6 12.5 11.7 12.5H8.8C8 12.5 7.4 13.1 7.4 13.9V15.7C7.4 16.6 8.2 17.5 10.2 17.5Z" fill="#f5cf2f"/></svg>
<div class="t" style="left:101px;top:587px;color:#6897bb;font-size:11.4px">part09_61_is_funcs.py</div>
<svg style="left:83px;top:606px" width="16" height="16" viewBox="0 0 16 16"><path d="M2 4L6 0V4Z" fill="#b4b7ba"/><path d="M7 0H12V7H2V5H7Z" fill="#a6a9ac"/><rect x="0" y="8" width="15" height="7.5" fill="#3a9ad4"/><text x="1" y="14.8" font-size="7.6" fill="#123550" font-family="Liberation Sans" font-weight="bold" letter-spacing="-0.2">MD</text></svg>
<div class="t" style="left:101px;top:607px;color:#6897bb;font-size:11.4px">readme.md</div>
<svg style="left:50px;top:628px" width="6" height="10" viewBox="0 0 6 10"><path d="M0.5 0.5L5 5L0.5 9.5" fill="none" stroke="#aeb1b5" stroke-width="1.2"/></svg>
<svg style="left:65px;top:627px" width="15" height="12" viewBox="0 0 15 12"><path d="M0 1.5C0 0.7 0.5 0 1.3 0H5.5L7 2H13.2C14 2 14.5 2.6 14.5 3.3V11.5H0Z" fill="#a0a3a7"/></svg>
<div class="t" style="left:83px;top:627px;color:#bbbbbb;font-size:11.4px">part10_exceptions</div>
<svg style="left:50px;top:648px" width="6" height="10" viewBox="0 0 6 10"><path d="M0.5 0.5L5 5L0.5 9.5" fill="none" stroke="#aeb1b5" stroke-width="1.2"/></svg>
<svg style="left:65px;top:647px" width="15" height="12" viewBox="0 0 15 12"><path d="M0 1.5C0 0.7 0.5 0 1.3 0H5.5L7 2H13.2C14 2 14.5 2.6 14.5 3.3V11.5H0Z" fill="#a0a3a7"/></svg>
<div class="t" style="left:83px;top:647px;color:#8b9a3c">venv</div>
<div class="t" style="left:113px;top:647px;color:#787878">library root</div>
<div class="a" style="left:22px;top:663px;width:258px;height:13px;overflow:hidden"><div class="a" style="left:-22px;top:-663px;width:300px;height:700px">
<svg style="left:68px;top:666px" width="16" height="16" viewBox="0 0 16 16"><path d="M5.5 0.5H12V13.5H1.5V5Z" fill="#aeb1b5"/><path d="M1.5 4L4.5 0.5V4Z" fill="#aeb1b5"/><path d="M1.5 4.2H4.8V0.5" fill="none" stroke="#3c3f41" stroke-width="0.9"/><circle cx="8" cy="12" r="3" fill="#3c3f41"/></svg>
<div class="t" style="left:86px;top:667px;color:#bbbbbb;font-size:11.4px">.gitignore</div>
</div></div>
<div class="a" style="left:270px;top:88px;width:9px;height:503px;background:rgba(120,122,125,0.45)"></div>
<div class="a" style="left:23px;top:668px;width:189px;height:8px;background:rgba(120,122,125,0.45)"></div>
<div class="a" style="left:280px;top:57px;width:110px;height:25px;background:#4e5254"></div>
<div class="a" style="left:280px;top:82px;width:110px;height:3px;background:#4a88c7"></div>
<svg style="left:288px;top:63px" width="16" height="16" viewBox="0 0 16 16"><path d="M2 4L6 0V4Z" fill="#b4b7ba"/><path d="M7 0H12V7H2V5H7Z" fill="#a6a9ac"/><rect x="0" y="8" width="15" height="7.5" fill="#3a9ad4"/><text x="1" y="14.8" font-size="7.6" fill="#123550" font-family="Liberation Sans" font-weight="bold" letter-spacing="-0.2">MD</text></svg>
<div class="t" style="left:308px;top:64px;color:#6897bb">readme.md</div>
<svg style="left:373px;top:66px" width="8" height="8" viewBox="0 0 8 8"><path d="M0.5 0.5L7.5 7.5M7.5 0.5L0.5 7.5" stroke="#6e7174" stroke-width="1.2"/></svg>
<svg style="left:1332px;top:65px" width="5" height="14" viewBox="0 0 5 14"><circle cx="2.5" cy="2" r="1.5" fill="#aeb1b5"/><circle cx="2.5" cy="7" r="1.5" fill="#aeb1b5"/><circle cx="2.5" cy="12" r="1.5" fill="#aeb1b5"/></svg>
<div class="a" style="left:280px;top:84px;width:1066px;height:593px;overflow:hidden"><div class="a" style="left:-280px;top:-84px;width:1368px;height:768px">
<div class="md" style="left:313px;top:145px;font-size:34px;font-weight:700;color:#b9bed0;line-height:38px;-webkit-text-stroke:1.3px #b9bed0;letter-spacing:0.5px">クラスとインスタンス</div>
<div class="md" style="left:313px;top:239px;font-size:28px;font-weight:700;color:#b9bed0;line-height:32px;-webkit-text-stroke:0.6px #b9bed0">概要<span style="letter-spacing:1.5px"> - </span>「クラス」と「インスタンス」とは何か</div>
<div class="a" style="left:328.5px;top:297.5px;width:5px;height:5px;background:#c3c6d2;border-radius:50%"></div>
<div class="md" style="left:344px;top:289px;font-size:16px;font-weight:400;color:#bec1cb;line-height:20px;">「インスタンス」とは、プロパティやメソッドを持った実体のこと</div>
<div class="a" style="left:328.5px;top:323.5px;width:5px;height:5px;background:#c3c6d2;border-radius:50%"></div>
<div class="md" style="left:344px;top:315px;font-size:16px;font-weight:400;color:#bec1cb;line-height:20px;">「インスタンス」は、クラスから生成される</div>
<div class="a" style="left:328.5px;top:349.5px;width:5px;height:5px;background:#c3c6d2;border-radius:50%"></div>
<div class="md" style="left:344px;top:341px;font-size:16px;font-weight:400;color:#bec1cb;line-height:20px;">ひとつの「クラス」から、複数の「インスタンス」を生成できる</div>
<div class="md" style="left:313px;top:382px;font-size:16px;font-weight:400;color:#bec1cb;line-height:20px;">「クラス」から話をはじめるとかえって分かりにくい。</div>
<div class="md" style="left:313px;top:408px;font-size:16px;font-weight:400;color:#bec1cb;line-height:20px;">最終的に生成して操作したいのは「インスタンス」のほう。</div>
<div class="md" style="left:313px;top:449px;font-size:16px;font-weight:400;color:#bec1cb;line-height:20px;">なので、「インスタンスとは何か」というところから話をはじめたほうがおそらく分かりやすい。</div>
<div class="md" style="left:313px;top:491px;font-size:16px;font-weight:400;color:#bec1cb;line-height:20px;">「インスタンス」は、「クラス」を元にして生成する。</div>
<div class="md" style="left:313px;top:516px;font-size:16px;font-weight:400;color:#bec1cb;line-height:20px;">そして、「インスタンス」は、「プロパティ(インスタンス変数)」と「インスタンスメソッド」の2つを有する。</div>
<div class="a" style="left:313px;top:556px;width:995px;height:1px;background:#4a4a4a"></div>
<div class="a" style="left:313px;top:620px;width:995px;height:1px;background:#4a4a4a"></div>
<div class="a" style="left:313px;top:556px;width:1px;height:121px;background:#4a4a4a"></div>
<div class="a" style="left:469px;top:556px;width:1px;height:121px;background:#4a4a4a"></div>
<div class="a" style="left:527px;top:556px;width:1px;height:121px;background:#4a4a4a"></div>
<div class="a" style="left:746px;top:556px;width:1px;height:121px;background:#4a4a4a"></div>
<div class="a" style="left:1307px;top:556px;width:1px;height:121px;background:#4a4a4a"></div>
<div class="md" style="left:362px;top:579px;font-size:16px;font-weight:700;color:#bec1cb;line-height:20px;">属性(*1)</div>
<div class="md" style="left:490px;top:566px;font-size:16px;font-weight:700;color:#bec1cb;line-height:20px;">性</div>
<div class="md" style="left:490px;top:592px;font-size:16px;font-weight:700;color:#bec1cb;line-height:20px;">質</div>
<div class="md" style="left:620px;top:579px;font-size:16px;font-weight:700;color:#bec1cb;line-height:20px;">説明</div>
<div class="md" style="left:965px;top:579px;font-size:16px;font-weight:700;color:#bec1cb;line-height:20px;">例(人間であれば)</div>
<div class="md" style="left:326px;top:630px;font-size:16px;font-weight:400;color:#bec1cb;line-height:20px;">プロパティ</div>
<div class="md" style="left:326px;top:656px;font-size:16px;font-weight:400;color:#bec1cb;line-height:20px;">(インスタンス変</div>
<div class="md" style="left:484px;top:644px;font-size:16px;font-weight:400;color:#bec1cb;line-height:20px;">静</div>
<div class="md" style="left:484px;top:670px;font-size:16px;font-weight:400;color:#bec1cb;line-height:20px;">的</div>
<div class="md" style="left:541px;top:644px;font-size:16px;font-weight:400;color:#bec1cb;line-height:20px;">インスタンスが持つ基本情</div>
<div class="md" style="left:541px;top:670px;font-size:16px;font-weight:400;color:#bec1cb;line-height:20px;">報</div>
<div class="md" style="left:760px;top:657px;font-size:16px;font-weight:400;color:#bec1cb;line-height:20px;">身長、体重、苗字、名前、 ...</div>
</div></div>
<div class="a" style="left:1340px;top:85px;width:6px;height:17px;background:#4b4d4f;border-radius:3px"></div>
<div class="a" style="left:1244px;top:110px;width:82px;height:28px;background:#323436;border-radius:4px"></div>
<div class="a" style="left:1300px;top:113px;width:22px;height:22px;background:#4a4c4e;border-radius:3px"></div>
<svg style="left:1253px;top:119px" width="12" height="11" viewBox="0 0 12 11"><path d="M0 1H12M0 4H12M0 7H12M0 10H12" stroke="#aeb1b5" stroke-width="1.2"/></svg>
<svg style="left:1279px;top:118px" width="12" height="12" viewBox="0 0 12 12"><rect x="0" y="0" width="12" height="12" fill="#aeb1b5"/><rect x="2" y="2" width="3" height="8" fill="#3c3f41"/></svg>
<svg style="left:1305px;top:118px" width="12" height="12" viewBox="0 0 12 12"><rect x="0" y="0" width="12" height="12" fill="#aeb1b5"/><path d="M1 9L4 5L6 7L8 4L11 9Z" fill="#4a4c4e"/></svg>
<div class="a" style="left:280px;top:677px;width:1066px;height:0px;"></div>
<svg style="left:1351px;top:67px" width="14" height="16" viewBox="0 0 14 16"><path d="M7 1.5C4 1.5 3 4 3 6V10L1.5 12H12.5L11 10V6C11 4 10 1.5 7 1.5Z" fill="#aeb1b5"/><path d="M5.5 13.5H8.5" stroke="#aeb1b5" stroke-width="1.4"/><circle cx="11" cy="3" r="2.6" fill="#3592c4"/></svg>
<div class="t" style="left:1363px;top:86px;transform-origin:0 0;transform:rotate(90deg);color:#bbbbbb;font-size:11.5px">Notifications</div>
<svg style="left:1351px;top:168px" width="12" height="13" viewBox="0 0 12 13"><ellipse cx="6" cy="2.5" rx="5" ry="2" fill="#aeb1b5"/><path d="M1 4V11C1 12 3 13 6 13C9 13 11 12 11 11V4" fill="none" stroke="#aeb1b5" stroke-width="1.4"/><path d="M1 7.5C1 8.5 3 9.5 6 9.5C9 9.5 11 8.5 11 7.5" fill="none" stroke="#aeb1b5" stroke-width="1.2"/></svg>
<div class="t" style="left:1363px;top:186px;transform-origin:0 0;transform:rotate(90deg);color:#bbbbbb;font-size:11.5px">Database</div>
<svg style="left:1351px;top:256px" width="12" height="12" viewBox="0 0 12 12"><g fill="#aeb1b5"><rect x="0" y="0" width="2.5" height="2.5"/><rect x="4.5" y="0" width="2.5" height="2.5"/><rect x="9" y="0" width="2.5" height="2.5"/><rect x="0" y="4.5" width="2.5" height="2.5"/><rect x="4.5" y="4.5" width="2.5" height="2.5"/><rect x="9" y="4.5" width="2.5" height="2.5"/><rect x="0" y="9" width="2.5" height="2.5"/><rect x="4.5" y="9" width="2.5" height="2.5"/><rect x="9" y="9" width="2.5" height="2.5"/></g></svg>
<div class="t" style="left:1363px;top:272px;transform-origin:0 0;transform:rotate(90deg);color:#bbbbbb;font-size:11.5px">SciView</div>
<svg style="left:1349px;top:331px" width="16" height="14" viewBox="0 0 16 14"><path d="M3 4C3 1 5 0.5 8 0.5C11 0.5 13 1 13 4V5C15 5.5 15.5 7 15.5 9C15.5 12 12 13.5 8 13.5C4 13.5 0.5 12 0.5 9C0.5 7 1 5.5 3 5Z" fill="#aeb1b5"/><ellipse cx="5.5" cy="8.5" rx="2.5" ry="2.8" fill="#3c3f41"/><ellipse cx="10.5" cy="8.5" rx="2.5" ry="2.8" fill="#3c3f41"/><circle cx="5.5" cy="9" r="1" fill="#aeb1b5"/><circle cx="10.5" cy="9" r="1" fill="#aeb1b5"/></svg>
<div class="t" style="left:1363px;top:351px;transform-origin:0 0;transform:rotate(90deg);color:#bbbbbb;font-size:11.5px">GitHub Copilot</div>
<svg style="left:31px;top:682px" width="14" height="14" viewBox="0 0 14 14"><path d="M3.5 2V12.5M3.5 9C3.5 6.5 9.5 7 9.5 3.5" fill="none" stroke="#aeb1b5" stroke-width="1.8"/><circle cx="9.5" cy="2.5" r="1.7" fill="#aeb1b5"/><circle cx="3.5" cy="12.5" r="1.7" fill="#aeb1b5"/><circle cx="3.5" cy="2" r="1.5" fill="#aeb1b5"/></svg>
<div class="t" style="left:47px;top:683px;color:#bbbbbb;font-size:10.6px">Git</div>
<svg style="left:83px;top:682px" width="14" height="14" viewBox="0 0 14 14"><path d="M7 1L13 4L7 7L1 4Z" fill="#aeb1b5"/><path d="M1 7L7 10L13 7M1 10L7 13L13 10" fill="none" stroke="#aeb1b5" stroke-width="1.3"/></svg>
<div class="t" style="left:100px;top:683px;color:#bbbbbb;font-size:10.6px">Python Packages</div>
<svg style="left:204px;top:682px" width="14" height="14" viewBox="0 0 14 14"><path d="M0 3H2M4 3H11M0 7H2M4 7H11M0 11H2M4 11H11" stroke="#aeb1b5" stroke-width="1.6"/></svg>
<div class="t" style="left:220px;top:683px;color:#bbbbbb;font-size:10.6px">TODO</div>
<svg style="left:271px;top:682px" width="14" height="14" viewBox="0 0 14 14"><path d="M7 1C4.5 1 4.5 2 4.5 3V4.5H7.5V5H2.5C1 5 1 9 2.5 9H4V7.5C4 7 4.5 6.5 5 6.5H9C9.5 6.5 10 6 10 5.5V3C10 1.5 9 1 7 1Z" fill="#aeb1b5"/><path d="M7 13C9.5 13 9.5 12 9.5 11V9.5H6.5V9H11.5C13 9 13 5 11.5 5H10V6.5C10 7 9.5 7.5 9 7.5H5C4.5 7.5 4 8 4 8.5V11C4 12.5 5 13 7 13Z" fill="#aeb1b5"/></svg>
<div class="t" style="left:288px;top:683px;color:#bbbbbb;font-size:10.6px">Python Console</div>
<svg style="left:388px;top:682px" width="14" height="14" viewBox="0 0 14 14"><circle cx="6" cy="7" r="5.5" fill="#aeb1b5"/><path d="M6 3.5V7.5" stroke="#3c3f41" stroke-width="1.5"/><circle cx="6" cy="9.8" r="0.9" fill="#3c3f41"/></svg>
<div class="t" style="left:404px;top:683px;color:#bbbbbb;font-size:10.6px">Problems</div>
<svg style="left:470px;top:682px" width="14" height="14" viewBox="0 0 14 14"><rect x="0" y="1" width="12" height="11" fill="#aeb1b5"/><path d="M2.5 4L5 6.5L2.5 9" fill="none" stroke="#3c3f41" stroke-width="1.3"/><path d="M6 9.5H9.5" stroke="#3c3f41" stroke-width="1.2"/></svg>
<div class="t" style="left:487px;top:683px;color:#bbbbbb;font-size:10.6px">Terminal</div>
<svg style="left:551px;top:682px" width="14" height="14" viewBox="0 0 14 14"><rect x="5" y="1" width="9" height="12" fill="none" stroke="#aeb1b5" stroke-width="1.2"/><rect x="0" y="2.5" width="8" height="9" fill="#aeb1b5"/><path d="M2 4.5L6 9.5M6 4.5L2 9.5" stroke="#3c3f41" stroke-width="1.2"/><path d="M9 4H13M9 7H13M9 10H13" stroke="#aeb1b5"/></svg>
<div class="t" style="left:568px;top:683px;color:#bbbbbb;font-size:10.6px">ExcelReader</div>
<svg style="left:650px;top:682px" width="14" height="14" viewBox="0 0 14 14"><path d="M3.5 1H9.5L13 7L9.5 13H3.5L0 7Z" fill="#aeb1b5"/><path d="M5 4L9.5 7L5 10Z" fill="#3c3f41"/></svg>
<div class="t" style="left:667px;top:683px;color:#bbbbbb;font-size:10.6px">Services</div>
<svg style="left:7px;top:703px" width="13" height="13" viewBox="0 0 13 13"><rect x="3.5" y="0.5" width="9" height="9" fill="none" stroke="#aeb1b5"/><path d="M0.5 3V12.5H10" fill="none" stroke="#aeb1b5"/></svg>
<div class="t" style="left:27px;top:703px;color:#bbbbbb;font-size:11.75px">Localized PyCharm 2022.2.1 is available // Switch and restart // Don't ask again (8 minutes ago)</div>
<svg style="left:916px;top:701px" width="18" height="16" viewBox="0 0 18 16"><path d="M3 12C1 12 0 10.5 0 9C0 7.5 1 6.5 2.5 6.3C2.8 4 4.5 2.5 7 2.5C9 2.5 10.5 3.7 11 5.5C12.8 5.5 14 7 14 8.5" fill="#aeb1b5"/><path d="M3 12H9" stroke="#aeb1b5" stroke-width="1"/><circle cx="13" cy="12" r="3" fill="none" stroke="#aeb1b5" stroke-width="1.6"/></svg>
<svg style="left:941px;top:702px" width="16" height="15" viewBox="0 0 16 15"><path d="M3 4C3 1 5 0.5 8 0.5C11 0.5 13 1 13 4V5C15 5.5 15.5 7 15.5 9C15.5 12 12 13.5 8 13.5C4 13.5 0.5 12 0.5 9C0.5 7 1 5.5 3 5Z" fill="#aeb1b5"/><ellipse cx="5.5" cy="8.5" rx="2.5" ry="2.8" fill="#3c3f41"/><ellipse cx="10.5" cy="8.5" rx="2.5" ry="2.8" fill="#3c3f41"/></svg>
<div class="t" style="left:970px;top:703px;color:#bbbbbb;font-size:11.5px">CRLF</div>
<div class="t" style="left:1009px;top:703px;color:#bbbbbb;font-size:11.5px">UTF-8</div>
<div class="t" style="left:1052px;top:703px;color:#bbbbbb;font-size:11.5px">4 spaces</div>
<div class="t" style="left:1108px;top:703px;color:#bbbbbb;font-size:11.5px">Python 3.10 (python_basic_sec2)</div>
<svg style="left:1294px;top:702px" width="10" height="15" viewBox="0 0 10 15"><path d="M2 1V14M2 9C2 6 8 7 8 2" fill="none" stroke="#aeb1b5" stroke-width="1.6"/><circle cx="8" cy="2" r="1.5" fill="#aeb1b5"/></svg>
<div class="t" style="left:1308px;top:703px;color:#bbbbbb;font-size:11.5px">main</div>
<svg style="left:1346px;top:702px" width="14" height="14" viewBox="0 0 14 14"><path d="M3 6V4C3 2 4.5 1 6 1C7.5 1 9 2 9 4" fill="none" stroke="#aeb1b5" stroke-width="1.4"/><rect x="1" y="7" width="12" height="7" fill="#aeb1b5"/></svg>
<svg style="left:584px;top:732px" width="25" height="25" viewBox="0 0 25 25"><defs><linearGradient id="wg" x1="0" y1="0" x2="1" y2="1"><stop offset="0" stop-color="#7fdcfb"/><stop offset="1" stop-color="#2a8ef0"/></linearGradient></defs><g fill="url(#wg)"><rect x="1" y="1" width="11" height="11"/><rect x="13" y="1" width="11" height="11"/><rect x="1" y="13" width="11" height="11"/><rect x="13" y="13" width="11" height="11"/></g></svg>
<svg style="left:628px;top:732px" width="26" height="26" viewBox="0 0 26 26"><circle cx="11" cy="11" r="8" fill="#3a4448" stroke="#e8e8e8" stroke-width="2.4"/><path d="M17 17L23 23" stroke="#e8e8e8" stroke-width="2.8" stroke-linecap="round"/></svg>
<div class="a" style="left:665px;top:724px;width:40px;height:39px;background:#1f323a;border-radius:5px"></div>
<svg style="left:672px;top:732px" width="26" height="26" viewBox="0 0 26 26"><path d="M0 4L8 0L22 2L26 12L20 26L6 24L0 14Z" fill="#21d789"/><path d="M14 0L26 6L24 20Z" fill="#fcf84a"/><path d="M0 14L6 26L14 20Z" fill="#087cfa"/><rect x="5" y="5" width="16" height="16" fill="#000"/><text x="7" y="13" font-size="7.5" font-weight="bold" fill="#fff" font-family="Liberation Sans">PC</text><rect x="7" y="16.5" width="6" height="1.4" fill="#fff"/></svg>
<div class="a" style="left:677px;top:760px;width:16px;height:3px;background:#4ca0e8;border-radius:2px"></div>
<svg style="left:715px;top:732px" width="28" height="24" viewBox="0 0 28 24"><path d="M1 3C1 2 2 1 3 1H11L13 4H25C26 4 27 5 27 6V22C27 23 26 23 25 23H3C2 23 1 23 1 22Z" fill="#f6c143"/><path d="M1 8H27V22C27 23 26 23 25 23H3C2 23 1 23 1 22Z" fill="#fcd567"/><rect x="8" y="14" width="12" height="9" fill="#2a7bd4"/></svg>
<div class="a" style="left:725px;top:761px;width:6px;height:3px;background:#9aa0a6;border-radius:2px"></div>
<svg style="left:760px;top:732px" width="24" height="24" viewBox="0 0 24 24"><rect x="0" y="0" width="24" height="24" rx="4" fill="#e8542a"/><path d="M16 6H8V18H16" fill="none" stroke="#fff" stroke-width="3"/></svg>
<div class="a" style="left:769px;top:761px;width:6px;height:3px;background:#9aa0a6;border-radius:2px"></div>
<svg style="left:1019px;top:740px" width="13" height="8" viewBox="0 0 13 8"><path d="M1 7L6.5 1.5L12 7" fill="none" stroke="#e8e8e8" stroke-width="1.5"/></svg>
<svg style="left:1042px;top:735px" width="18" height="17" viewBox="0 0 18 17"><path d="M2 3L6 0.5L9 3L6 5.5ZM9 3L12 0.5L16 3L12 5.5ZM2 8L6 5.5L9 8L6 10.5ZM9 8L12 5.5L16 8L12 10.5ZM5 12L9 9.5L13 12L9 14.5Z" fill="#e8e8e8"/><path d="M13 0.5H17L13 5H17" fill="none" stroke="#e8e8e8" stroke-width="1.2"/></svg>
<svg style="left:1072px;top:733px" width="12" height="20" viewBox="0 0 12 20"><rect x="3" y="1" width="6" height="11" rx="3" fill="none" stroke="#7cc4ef" stroke-width="1.4"/><path d="M1 9C1 12 3 14 6 14C9 14 11 12 11 9M6 14V18" fill="none" stroke="#7cc4ef" stroke-width="1.4"/></svg>
<svg style="left:1105px;top:735px" width="12" height="17" viewBox="0 0 12 17"><path d="M4.5 0.5H7.5L11 15H12V16H7.5V15H8.5L7.6 11H4.4L3.5 15H4.5V16H0V15H1ZM6 4L4.8 9.5H7.2Z" fill="#e8e8e8"/></svg>
<svg style="left:1140px;top:734px" width="20" height="18" viewBox="0 0 20 18"><circle cx="8" cy="8.5" r="7" fill="#1f5fd6"/><circle cx="14" cy="14" r="2.6" fill="#e04a3f"/><circle cx="12" cy="15" r="1.8" fill="#f5b400"/></svg>
<svg style="left:1177px;top:736px" width="20" height="15" viewBox="0 0 20 15"><path d="M1 5C6 0 14 0 19 5M3.5 8C7 4.5 13 4.5 16.5 8M6 11C8.5 9 11.5 9 14 11" fill="none" stroke="#e8e8e8" stroke-width="1.5"/><circle cx="10" cy="13.5" r="1.3" fill="#e8e8e8"/></svg>
<svg style="left:1202px;top:736px" width="20" height="15" viewBox="0 0 20 15"><path d="M1 5H4L8 1.5V13.5L4 10H1Z" fill="none" stroke="#e8e8e8" stroke-width="1.3"/><path d="M11 4.5C12.5 6 12.5 9 11 10.5M14 2.5C16.5 5 16.5 10 14 12.5" fill="none" stroke="#e8e8e8" stroke-width="1.3"/></svg>
<svg style="left:1227px;top:735px" width="20" height="16" viewBox="0 0 20 16"><path d="M1 5H6M10 5H15V14H1Z" fill="none" stroke="#e8e8e8" stroke-width="1.3"/><rect x="16" y="7.5" width="2" height="4" fill="#e8e8e8"/><rect x="3" y="7" width="9" height="5" fill="#e8e8e8"/><path d="M8 0L4.5 6H8L6 10" fill="none" stroke="#e8e8e8" stroke-width="1.3"/></svg>
<div class="t" style="left:1261px;top:729px;color:#ffffff;font-size:12px;width:60px;text-align:right">5:56</div>
<div class="t" style="left:1260px;top:745px;color:#ffffff;font-size:12px;width:61px;text-align:right">2022/10/18</div>
<svg style="left:1333px;top:735px" width="18" height="18" viewBox="0 0 18 18"><path d="M8.5 3C5.5 3 4 5 4 8V12L2 14.5H15L13 12V8C13 5 11.5 3 8.5 3Z" fill="none" stroke="#e8e8e8" stroke-width="1.3"/><path d="M6.5 16C7 17 10 17 10.5 16" stroke="#e8e8e8" stroke-width="1.3" fill="none"/><path d="M6 6.5H9L6 10H9M11 1H14L11 4.5H14" fill="none" stroke="#e8e8e8" stroke-width="1"/></svg>
</body></html>
